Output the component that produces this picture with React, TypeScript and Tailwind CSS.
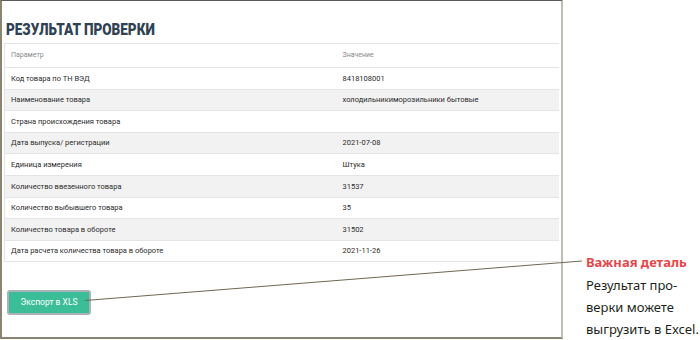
import React from 'react';

const rows: [string, string][] = [
    ['Код товара по ТН ВЭД', '8418108001'],
    ['Наименование товара', 'холодильникиморозильники бытовые'],
    ['Страна происхождения товара', ''],
    ['Дата выпуска/ регистрации', '2021-07-08'],
    ['Единица измерения', 'Штука'],
    ['Количество ввезенного товара', '31537'],
    ['Количество выбывшего товара', '35'],
    ['Количество товара в обороте', '31502'],
    ['Дата расчета количества товара в обороте', '2021-11-26'],
];

const App: React.FC = () => {
    return (
        <div className="relative w-[700px] h-[340px] bg-white flex overflow-hidden font-['Roboto',sans-serif]">
            {/* Screenshot frame */}
            <div className="w-[563px] h-[339px] shrink-0 flex flex-col border-t border-l-2 border-b-2 border-r-2 border-t-[#5a5a5a] border-l-[#8c8473] border-b-[#8c8473] border-r-[#c2bdb7] bg-white">
                <div className="h-[42px] pl-[4px] pt-[17px]">
                    <h1 className="inline-block origin-left scale-x-[0.795] text-[17px] leading-[20px] font-black text-[#2f4254] font-['Roboto',sans-serif] whitespace-nowrap">
                        РЕЗУЛЬТАТ ПРОВЕРКИ
                    </h1>
                </div>
                <table className="ml-[2px] w-[555px] border-collapse border-l border-b border-[#e4e4e4] text-[7.5px]">
                    <thead>
                        <tr className="h-[24px] border-t border-b border-[#e4e4e4] text-[#8a8a8a] text-[7px]">
                            <th className="pl-[6px] text-left font-normal w-[338px]">Параметр</th>
                            <th className="text-left font-normal">Значение</th>
                        </tr>
                    </thead>
                    <tbody>
                        {rows.map(([param, value], idx) => (
                            <tr
                                key={idx}
                                className={`h-[21.6px] border-b border-[#e4e4e4] text-[#2b2b2b] ${idx % 2 === 1 ? 'bg-[#f2f2f2]' : 'bg-white'}`}
                            >
                                <td className="pl-[6px]">{param}</td>
                                <td>{value}</td>
                            </tr>
                        ))}
                    </tbody>
                </table>
                <div className="pl-[5px] pt-[26px]">
                    <button className="w-[84px] h-[25px] rounded-[3px] border-2 border-[#aab2b8] bg-[#3bbd98] text-white text-[8.5px]">
                        Экспорт в XLS
                    </button>
                </div>
            </div>

            {/* Callout */}
            <div className="flex-1 flex flex-col justify-end pl-[23px] font-['Noto_Sans',sans-serif] text-[13px] leading-[22px] text-[#231f20] whitespace-nowrap">
                <p className="font-bold text-[#e8474a] mb-[1px]">Важная деталь</p>
                <p>Результат про-</p>
                <p>верки можете</p>
                <p>выгрузить в Excel.</p>
            </div>

            <svg className="absolute inset-0 pointer-events-none" width="700" height="340">
                <line x1="85" y1="300.5" x2="582" y2="261" stroke="#6e6854" strokeWidth="1" />
            </svg>
        </div>
    );
};

export default App;
